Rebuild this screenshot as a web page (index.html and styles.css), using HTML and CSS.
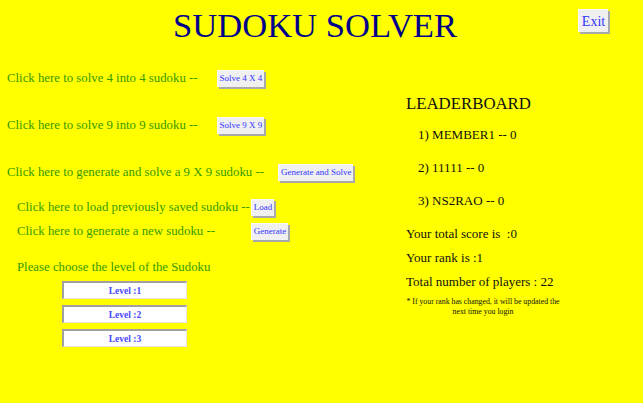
FILE: index.html
```html
<!DOCTYPE html>
<html>
<head>
<meta charset="utf-8">
<link rel="stylesheet" href="styles.css">
</head>
<body>
<header class="header">
  <h1 class="title">SUDOKU SOLVER</h1>
  <button class="btn exit">Exit</button>
</header>
<main class="main">
  <section class="left">
    <div class="row r1"><span class="label">Click here to solve 4 into 4 sudoku --</span><button class="btn gap19">Solve 4 X 4</button></div>
    <div class="row r2"><span class="label">Click here to solve 9 into 9 sudoku --</span><button class="btn gap19">Solve 9 X 9</button></div>
    <div class="row r3"><span class="label">Click here to generate and solve a 9 X 9 sudoku --</span><button class="btn gap14">Generate and Solve</button></div>
    <div class="pair">
      <span class="label">Click here to load previously saved sudoku --</span><span class="cell"><button class="btn">Load</button></span>
      <span class="label">Click here to generate a new sudoku --</span><span class="cell"><button class="btn">Generate</button></span>
    </div>
    <div class="row r6 indent"><span class="label">Please choose the level of the Sudoku</span></div>
    <div class="levels">
      <button class="level">Level :1</button>
      <button class="level">Level :2</button>
      <button class="level">Level :3</button>
    </div>
  </section>
  <aside class="right">
    <h2 class="lb-title">LEADERBOARD</h2>
    <ol class="lb-list">
      <li class="lb-item">1) MEMBER1 -- 0</li>
      <li class="lb-item">2) 11111 -- 0</li>
      <li class="lb-item">3) NS2RAO -- 0</li>
    </ol>
    <p class="stat first">Your total score is &nbsp;:0</p>
    <p class="stat">Your rank is :1</p>
    <p class="stat">Total number of players : 22</p>
    <p class="note">* If your rank has changed, it will be updated the next time you login</p>
  </aside>
</main>
</body>
</html>
```
FILE: styles.css
```css
html, body {
  margin: 0;
  padding: 0;
  background: #ffff00;
  width: 643px;
  height: 403px;
  overflow: hidden;
  font-family: "Liberation Serif", "Times New Roman", serif;
}

.header {
  display: flex;
  align-items: flex-start;
  height: 51px;
}

.title {
  margin: 0 0 0 173px;
  font-size: 34.6px;
  line-height: 51px;
  font-weight: normal;
  color: #00008b;
  white-space: nowrap;
}

.btn {
  font-family: "Liberation Serif", "Times New Roman", serif;
  font-size: 9px;
  color: #3333ff;
  background: #f0f0f0;
  border: none;
  border-top: 1px solid #fafafa;
  border-left: 1px solid #fafafa;
  box-shadow: 2px 2px 0 #a9a9a9;
  height: 17px;
  padding: 0 2px;
  margin: 0;
  line-height: 15px;
}

.exit {
  margin: 9px 0 0 auto;
  margin-right: 35px;
  font-size: 14px;
  height: 23px;
  width: 30px;
  padding: 0;
}

.main {
  display: grid;
  grid-template-columns: 406px 1fr;
}

.left {
  padding-left: 7px;
  color: #379a00;
  font-size: 12.8px;
}

.row {
  display: flex;
  align-items: center;
  height: 24px;
}

.label {
  white-space: nowrap;
}

.r1 { margin-top: 15px; }
.r2 { margin-top: 23px; }
.r3 { margin-top: 23px; }

.gap19 { margin-left: 19px; }
.gap14 { margin-left: 14px; }

.pair {
  display: grid;
  grid-template-columns: auto auto;
  justify-content: start;
  align-items: center;
  grid-auto-rows: 24px;
  margin-top: 11px;
  padding-left: 10px;
}

.pair .cell {
  display: flex;
  align-items: center;
  padding-left: 1px;
}

.indent {
  padding-left: 10px;
}

.r6 { margin-top: 12px; }

.levels {
  display: flex;
  flex-direction: column;
  gap: 6px;
  margin-top: 2px;
  padding-left: 55px;
}

.level {
  width: 125px;
  height: 18px;
  background: #ffffff;
  border: none;
  border-top: 2px solid #a0a0a0;
  border-left: 2px solid #a0a0a0;
  border-bottom: 1px solid #e3e3e3;
  border-right: 1px solid #e3e3e3;
  font-family: "Liberation Serif", "Times New Roman", serif;
  font-size: 9.5px;
  font-weight: bold;
  color: #4848ff;
  padding: 0;
  margin: 0;
}

.right {
  color: #111;
  font-size: 13px;
}

.lb-title {
  margin: 41px 0 0 0;
  font-size: 16.8px;
  font-weight: normal;
  line-height: 24px;
}

.lb-list {
  list-style: none;
  margin: 9px 0 0 0;
  padding: 0 0 0 12px;
  display: flex;
  flex-direction: column;
  gap: 13px;
}

.lb-item {
  line-height: 20px;
}

.stat {
  margin: 0;
  line-height: 24px;
}

.stat.first {
  margin-top: 11px;
}

.note {
  margin: 3px 0 0 0;
  width: 154px;
  font-size: 7.8px;
  line-height: 10px;
  text-align: center;
}
```
